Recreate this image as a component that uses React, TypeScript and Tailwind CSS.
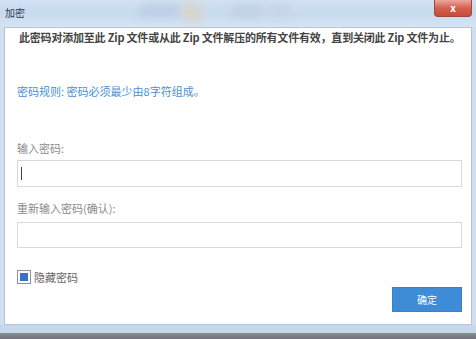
const App = () => {
  return (
    <div
      className="flex h-[339px] w-[476px] flex-col overflow-hidden bg-[#cfdff1]"
      style={{ fontFamily: '"Noto Sans CJK SC", "Noto Sans", sans-serif' }}
    >
      {/* title bar */}
      <div className="relative flex h-[27px] items-start bg-gradient-to-b from-[#d3e2f3] via-[#c8daef] to-[#d6e4f3]">
        <div className="absolute left-[140px] top-[5px] h-[12px] w-[40px] rounded-sm bg-[#bccee3] blur-[4px]" />
        <div className="absolute left-[182px] top-[3px] h-[18px] w-[20px] rounded-sm bg-[#d6d6cb] blur-[4px]" />
        <div className="absolute left-[232px] top-[5px] h-[12px] w-[30px] rounded-sm bg-[#c0d1e5] blur-[4px]" />
        <div className="absolute left-[270px] top-[5px] h-[10px] w-[20px] rounded-sm bg-[#c3d3e6] blur-[4px]" />
        <span className="relative ml-[5px] mt-[6px] text-[10px] leading-[14px] text-[#2b3a4c]">加密</span>
        <div className="relative ml-auto mr-[4px] flex h-[17px] w-[38px] items-center justify-center rounded-b-[4px] border border-t-0 border-[#9a4a40] bg-gradient-to-b from-[#e9a89c] via-[#d4604f] to-[#c84a39]">
          <span className="text-[10px] font-bold leading-none text-white">x</span>
        </div>
      </div>

      {/* client area */}
      <div className="mx-[4px] flex h-[298px] flex-col border border-[#b3c5da] bg-white pl-[12px] pr-[9px]">
        <p className="ml-[2px] mt-[1px] text-[11px] font-bold leading-[16px] tracking-[-0.2px] text-[#444]">
          此密码对添加至此 Zip 文件或从此 Zip 文件解压的所有文件有效，直到关闭此 Zip 文件为止。
        </p>
        <p className="mt-[38px] text-[11px] leading-[16px] text-[#4a90d0]">密码规则: 密码必须最少由8字符组成。</p>

        <label className="mt-[41px] text-[11px] leading-[16px] text-[#8c8c8c]">输入密码:</label>
        <div className="mt-[4px] flex h-[27px] items-center border border-[#d9d9d9] pl-[3px]">
          <span className="h-[13px] w-px bg-[#444]" />
        </div>

        <label className="mt-[13px] text-[11px] leading-[16px] text-[#8c8c8c]">重新输入密码(确认):</label>
        <div className="mt-[6px] h-[26px] border border-[#d9d9d9]" />

        <div className="mt-[22px] flex items-center gap-[3px]">
          <div className="flex h-[14px] w-[14px] items-center justify-center border border-[#8a94a3] bg-white">
            <div className="h-[8px] w-[8px] bg-[#3d6fc6]" />
          </div>
          <span className="text-[11px] leading-[14px] text-[#666]">隐藏密码</span>
        </div>

        <div className="mt-[3px] flex justify-end">
          <button className="flex h-[25px] w-[70px] items-center justify-center border border-[#3a80c6] bg-[#3e8cd6] text-[10px] text-white">
            确定
          </button>
        </div>
      </div>

      {/* bottom frame */}
      <div className="h-[8px] bg-[#c6d8ec]" />
      <div className="flex-1 bg-gradient-to-b from-[#8a8f96] to-[#6f7379]" />
    </div>
  );
};

export default App;
